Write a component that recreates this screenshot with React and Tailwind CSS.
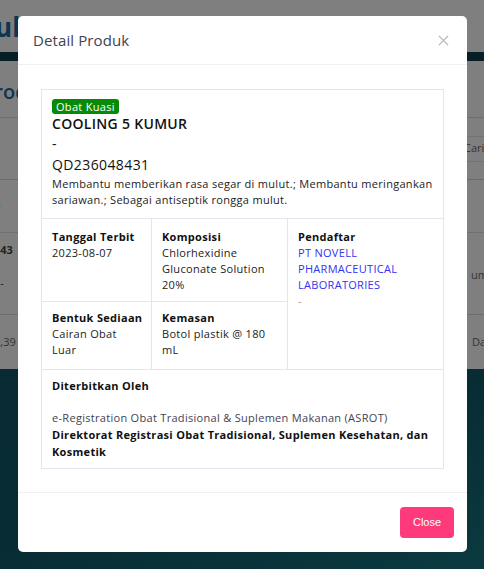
import React from "react";

const F = { fontFamily: '"Open Sans", "DejaVu Sans", sans-serif' };

function Background() {
  return (
    <div className="absolute inset-0 flex flex-col bg-[#7f7f7f]">
      <div className="h-[52px] flex items-center">
        <span className="text-[26px] font-bold text-[#0b3550] ml-[-62px] mt-[2px]">Modul</span>
      </div>
      <div className="h-[9px] bg-[#061f26]" />
      <div className="h-[57px] border-b border-[#6f6f6f] flex items-center">
        <span className="text-[20px] font-semibold text-[#0b3550] ml-[-18px] mt-[6px]">Produk</span>
      </div>
      <div className="h-[62px] border-b border-[#6a6a6a] flex justify-end items-center">
        <div className="h-[26px] w-[20px] border-y border-[#727272] flex items-center text-[11px] text-[#333]">Cari</div>
      </div>
      <div className="h-[53px] border-b border-[#707070] flex items-center">
        <span className="text-[11px] text-[#2b8a8a] ml-[-2px]">i</span>
      </div>
      <div className="h-[82px] border-b border-[#6d6d6d] flex justify-between">
        <div className="flex flex-col text-[11px] text-[#222] ml-[-6px] pt-[9px] gap-[16px]">
          <span className="font-bold">143</span>
          <span>3-</span>
        </div>
        <div className="text-[11px] text-[#333] mt-[34px] mr-[-4px]">um</div>
      </div>
      <div className="h-[54px] flex justify-between items-center">
        <span className="text-[11px] text-[#333] ml-[-6px]">0,39</span>
        <span className="text-[11px] text-[#333] mr-[-2px]">Da</span>
      </div>
      <div className="flex-1 bg-[linear-gradient(160deg,#072a33_0%,#082c34_50%,#0a3a3f_100%)]" />
    </div>
  );
}

export default function App() {
  return (
    <div className="relative w-[484px] h-[569px] overflow-hidden" style={F}>
      <Background />
      <div className="absolute left-[18px] top-[16px] w-[449px] bg-white rounded-[5px] flex flex-col">
        <div className="h-[49px] shrink-0 border-b border-[#eef0f4] flex items-center justify-between pl-[15px] pr-[18px]">
          <span className="text-[15px] font-medium text-[#3f4254] tracking-[0.1px]">Detail Produk</span>
          <svg width="11" height="11" viewBox="0 0 12 12" className="mt-[1px]">
            <path d="M1 1 L11 11 M11 1 L1 11" stroke="#b5b5c3" strokeWidth="1.4" />
          </svg>
        </div>
        <div className="px-[23px] pt-[24px] pb-[23px]">
          <div className="border border-[#e4e6ef] text-[#181c32]">
            <div className="px-[10px] pt-[9px] pb-[10px] border-b border-[#e4e6ef]">
              <div className="w-fit bg-[#078a07] text-white text-[11px] leading-[15px] px-[4px] tracking-[0.3px] rounded-[3px]">Obat Kuasi</div>
              <div className="text-[14px] font-semibold leading-[20px] text-[#111] tracking-[0.3px]">COOLING 5 KUMUR</div>
              <div className="text-[14px] leading-[20px] text-[#111]">-</div>
              <div className="text-[14px] leading-[22px] text-[#111] tracking-[0.4px]">QD236048431</div>
              <div className="text-[11px] leading-[16px] text-[#222] tracking-[0.3px] whitespace-nowrap">
                Membantu memberikan rasa segar di mulut.; Membantu meringankan<br />sariawan.; Sebagai antiseptik rongga mulut.
              </div>
            </div>
            <div className="grid grid-cols-[110px_136px_1fr] border-b border-[#e4e6ef] text-[11px] leading-[16px] tracking-[0.3px]">
              <div className="p-[10px] border-r border-b border-[#e4e6ef]">
                <div className="font-bold text-[#111]">Tanggal Terbit</div>
                <div className="text-[#222]">2023-08-07</div>
              </div>
              <div className="p-[10px] border-r border-b border-[#e4e6ef] h-[83px]">
                <div className="font-bold text-[#111]">Komposisi</div>
                <div className="text-[#222]">Chlorhexidine<br />Gluconate Solution<br />20%</div>
              </div>
              <div className="p-[10px] row-span-2">
                <div className="font-bold text-[#111]">Pendaftar</div>
                <div className="text-[#3333ee]">PT NOVELL<br />PHARMACEUTICAL<br />LABORATORIES</div>
                <div className="text-[#9a9a9a]">-</div>
              </div>
              <div className="p-[10px] pt-[8px] border-r border-[#e4e6ef] h-[67px]">
                <div className="font-bold text-[#111] whitespace-nowrap">Bentuk Sediaan</div>
                <div className="text-[#222]">Cairan Obat<br />Luar</div>
              </div>
              <div className="p-[10px] pt-[8px] border-r border-[#e4e6ef]">
                <div className="font-bold text-[#111]">Kemasan</div>
                <div className="text-[#222]">Botol plastik @ 180<br />mL</div>
              </div>
            </div>
            <div className="px-[10px] pt-[7px] pb-[8px] text-[11px] leading-[17px] tracking-[0.3px]">
              <div className="font-bold text-[#111]">Diterbitkan Oleh</div>
              <div className="h-[15px]" />
              <div className="text-[#3f4254]">e-Registration Obat Tradisional &amp; Suplemen Makanan (ASROT)</div>
              <div className="font-bold text-[#111]">Direktorat Registrasi Obat Tradisional, Suplemen Kesehatan, dan Kosmetik</div>
            </div>
          </div>
        </div>
        <div className="h-[60px] shrink-0 border-t border-[#eef0f4] flex justify-end pt-[14px] pr-[13px]">
          <button className="w-[54px] h-[31px] rounded-[4px] bg-[#ff3a7c] text-white text-[11px]" style={{ fontFamily: '"Liberation Sans", Arial, sans-serif' }}>Close</button>
        </div>
      </div>
    </div>
  );
}
